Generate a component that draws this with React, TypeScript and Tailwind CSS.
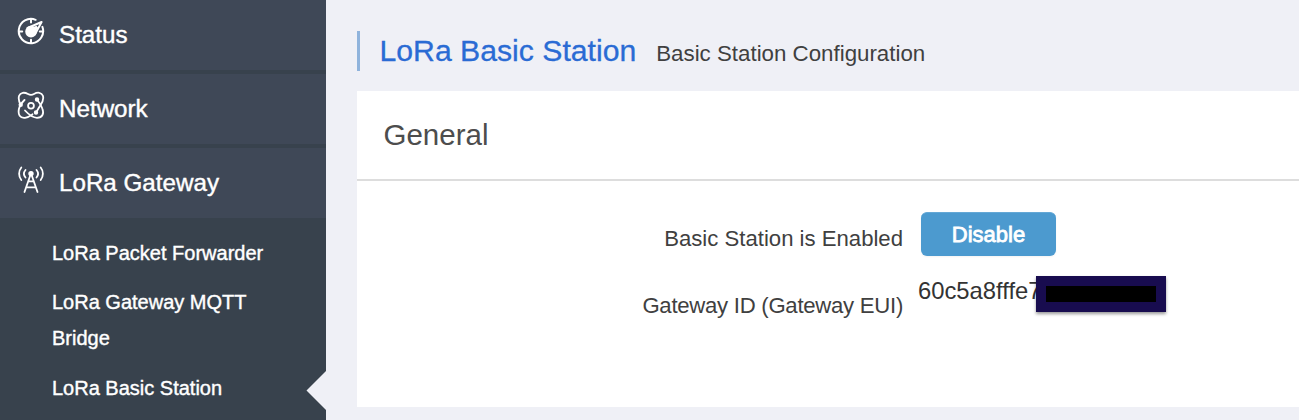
const StatusIcon = () => (
  <svg
    width="28"
    height="28"
    viewBox="0 0 28 28"
    fill="none"
    stroke="white"
    strokeWidth="2"
    strokeLinecap="round"
    strokeLinejoin="round"
  >
    <path d="M18.6 2.800A12.200 12.200 0 1 0 25.400 9.900" />
    <path d="M14 2v3.400M14 22.800v3.200M2 14.600h3.200M22.800 14.600H26" />
    <circle cx="14" cy="14.600" r="4.800" fill="white" />
    <path d="M10.500 11L24.600 5L18 17.200" />
    <path d="M12 11.500L19.500 8.800L21 10.500L18 16Z" fill="white" stroke="none" />
  </svg>
);

const NetworkIcon = () => (
  <svg
    width="28"
    height="28"
    viewBox="0 0 28 28"
    fill="none"
    stroke="white"
    strokeWidth="1.800"
    strokeLinecap="round"
    strokeLinejoin="round"
  >
    <path d="M7.500 9C5 11.500 2.700 14 1.900 18C.8 24 3 27.300 8 26.800C11 26.500 13 25 15.500 23.300" />
    <path d="M3.700 14C1.700 10 1.300 7 2.100 4.800C3.400 1.200 7.500 1 11 3C13 4.200 15 4.200 17 3C20.500 1 24.600 1.200 25.900 4.800C27 8.500 25.500 11.500 23.300 14.500C21.500 17 20.700 19 19 21.300" />
    <path d="M8 19.500C12 23.800 16 26.800 20 26.800C25.500 26.800 27.300 22.500 25.300 17.500C24 14 22 11 20 8.500" />
    <circle cx="14" cy="14.700" r="2.900" />
    <circle cx="20" cy="8.500" r="1.300" fill="white" />
    <circle cx="19" cy="21.500" r="1.300" fill="white" />
    <circle cx="3.700" cy="13.700" r="1.300" fill="white" />
  </svg>
);

const GatewayIcon = () => (
  <svg
    width="28"
    height="28"
    viewBox="0 0 28 28"
    fill="none"
    stroke="white"
    strokeWidth="1.800"
    strokeLinecap="round"
    strokeLinejoin="round"
  >
    <path d="M4.300 2.500C1.400 6 1.400 11.500 4.300 15M8.500 5C6.600 7.300 6.600 10.300 8.500 12.500" />
    <path d="M23.700 2.500C26.600 6 26.600 11.500 23.700 15M19.500 5C21.400 7.300 21.400 10.300 19.500 12.500" />
    <circle cx="14" cy="8.600" r="1.800" fill="white" />
    <path d="M13.400 10L7.500 27M14.600 10L20.500 27M11.500 16.300h5M9.500 22.300h9" />
  </svg>
);

const menu = [
  { title: "Status", icon: <StatusIcon /> },
  { title: "Network", icon: <NetworkIcon /> },
  { title: "LoRa Gateway", icon: <GatewayIcon /> },
];

const Sidebar = () => {
  return (
    <aside className="relative w-[326px] shrink-0 bg-[#38424d] text-white">
      <nav>
        {menu.map((data, ind) => (
          <a
            key={ind}
            className="mb-1 flex h-[70px] items-start bg-[#3f4857] pl-[17px] last:mb-0"
          >
            <span className="mt-[17px] w-[42px]">{data.icon}</span>
            <span className="pt-[19px] text-[24.200px] leading-[32px] [-webkit-text-stroke:0.4px_white]">
              {data.title}
            </span>
          </a>
        ))}
      </nav>
      <ul className="pl-[52px] pt-[17px] text-[20px] leading-9 [-webkit-text-stroke:0.4px_white]">
        <li className="mb-[13px]">LoRa Packet Forwarder</li>
        <li className="mb-[14px] w-[220px]">LoRa Gateway MQTT Bridge</li>
        <li>LoRa Basic Station</li>
      </ul>
      <svg
        className="absolute right-0 top-[371px]"
        width="20"
        height="40"
        viewBox="0 0 20 40"
      >
        <path d="M20 0L0.500 19.500L20 39Z" fill="#eff0f6" />
      </svg>
    </aside>
  );
};

const General = () => {
  return (
    <section className="h-[316px] bg-white">
      <h2 className="h-[90px] border-b-2 border-[#dddddd] pl-[26.500px] pt-[24px] text-[29.500px] leading-[40px] text-[#4d4d4d]">
        General
      </h2>
      <div className="flex pt-[31px]">
        <div className="w-[546px] text-right text-[22.150px] leading-[32px] text-[#404040]">
          <p className="pt-[11px]">Basic Station is Enabled</p>
          <p className="pt-[35px] tracking-[-0.012em]">
            Gateway ID (Gateway EUI)
          </p>
        </div>
        <div className="ml-[18px]">
          <button className="block h-11 w-[135px] rounded-md border-t border-[#64a8d6] bg-[#4c9acf] text-[22px] leading-[43px] text-white shadow-xs [-webkit-text-stroke:0.8px_white]">
            Disable
          </button>
          <div className="relative -ml-[3px] mt-[19px] h-9 w-[250px] text-[23.800px] leading-[32px] text-[#333333]">
            60c5a8fffe7
            <div className="absolute left-[118px] top-px h-[36px] w-[130px] bg-[#180c4f] px-[10px] pb-[10px] pt-[10px] shadow-[0_2px_3px_rgba(0,0,0,0.4)]">
              <div className="h-4 bg-black"></div>
            </div>
          </div>
        </div>
      </div>
    </section>
  );
};

const App = () => {
  return (
    <div className="flex h-[420px] w-[1299px] overflow-hidden bg-[#eff0f6] font-['Liberation_Sans',Arial,sans-serif]">
      <Sidebar />
      <main className="flex-1 pl-[31px] pt-[31px]">
        <header className="mb-5 flex h-10 items-baseline border-l-[3px] border-[#8fb3dc] pl-[19.500px]">
          <h1 className="text-[30.200px] leading-[40px] text-[#2a6bd4] [-webkit-text-stroke:0.3px_#2a6bd4]">
            LoRa Basic Station
          </h1>
          <span className="ml-[20px] text-[22.300px] text-[#404040]">
            Basic Station Configuration
          </span>
        </header>
        <General />
      </main>
    </div>
  );
};

export default App;
